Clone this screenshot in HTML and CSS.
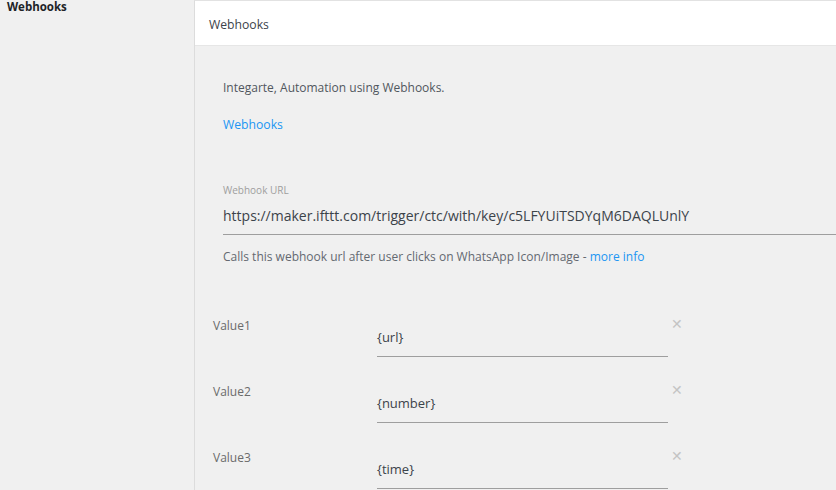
FILE: index.html
```html
<!DOCTYPE html>
<html>
<head>
<meta charset="utf-8">
<link rel="stylesheet" href="styles.css">
</head>
<body>
<div class="sidebar"><div class="side-title">Webhooks</div></div>
<div class="card">
  <div class="card-head">Webhooks</div>
  <div class="card-body">
    <p class="intro">Integarte, Automation using Webhooks.</p>
    <a class="link top-link" href="#">Webhooks</a>
    <div class="url-field">
      <div class="small-label">Webhook URL</div>
      <div class="url-input">https://maker.ifttt.com/trigger/ctc/with/key/c5LFYUiTSDYqM6DAQLUnlY</div>
    </div>
    <p class="desc">Calls this webhook url after user clicks on WhatsApp Icon/Image - <a class="link" href="#">more info</a></p>
    <div class="values">
      <div class="row"><div class="vlabel">Value1</div><div class="vinput">{url}</div><span class="close">&#x2715;</span></div>
      <div class="row"><div class="vlabel">Value2</div><div class="vinput">{number}</div><span class="close">&#x2715;</span></div>
      <div class="row"><div class="vlabel">Value3</div><div class="vinput">{time}</div><span class="close">&#x2715;</span></div>
    </div>
  </div>
</div>
</body>
</html>
```
FILE: styles.css
```css
html, body { margin: 0; padding: 0; }
body {
  background: #f0f0f0;
  font-family: "Open Sans", "Noto Sans", sans-serif;
  color: #3c434a;
  display: flex;
  height: 490px;
  overflow: hidden;
}
.sidebar { width: 194px; flex: none; }
.side-title {
  font-weight: 700;
  font-size: 11.5px;
  line-height: 16px;
  padding-left: 7px;
  margin-top: -1px;
  color: #1d2327;
}
.card {
  flex: 1;
  border-left: 1px solid #dcdcdc;
  border-top: 1px solid #e2e2e2;
  background: #f0f0f0;
  overflow: hidden;
}
.card-head {
  background: #fff;
  height: 45px;
  box-sizing: border-box;
  padding-top: 2px;
  line-height: 44px;
  padding-left: 14px;
  font-size: 12.2px;
  color: #3c434a;
  border-bottom: 1px solid #e6e6e6;
}
.card-body { padding-left: 28px; }
.intro {
  margin: 32px 0 0;
  font-size: 12px;
  line-height: 20px;
  color: #50575e;
}
.link { color: #2196f3; text-decoration: none; }
.top-link { display: block; font-size: 12.2px; line-height: 20px; margin-top: 17px; }
.url-field { margin-top: 48px; }
.small-label { font-size: 10px; line-height: 14px; color: #9e9e9e; }
.url-input {
  margin-top: 7px;
  font-size: 14px;
  line-height: 24px;
  color: #3c434a;
  border-bottom: 1px solid #9e9e9e;
  padding-bottom: 6px;
}
.desc {
  margin: 12px 0 0;
  font-size: 12px;
  line-height: 20px;
  color: #646970;
}
.values { margin-left: -10px; margin-top: 49px; }
.row { display: flex; height: 66px; }
.vlabel { width: 164px; font-size: 12px; line-height: 16px; color: #6b6b6b; padding-top: 2px; }
.vinput {
  width: 291px;
  height: 36px;
  margin-top: 5px;
  box-sizing: border-box;
  font-size: 13px;
  line-height: 22px;
  padding-top: 5px;
  color: #3c434a;
  border-bottom: 1px solid #9e9e9e;
}
.close { margin-left: 3px; color: #c4c4c4; font-size: 14px; line-height: 16px; }
```
